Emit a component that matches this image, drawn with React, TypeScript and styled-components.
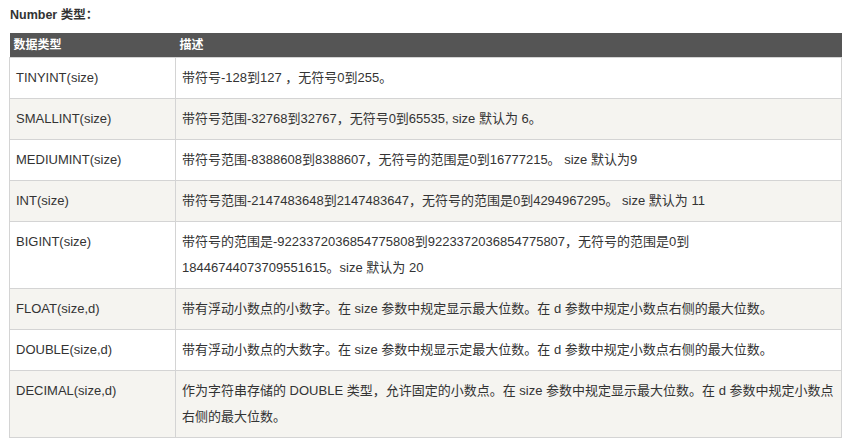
import React from 'react'
import styled, { createGlobalStyle } from 'styled-components'

const GlobalStyle = createGlobalStyle`
  body {
    margin: 0;
    background: #fff;
    font-family: "Liberation Sans", "Noto Sans CJK SC", sans-serif;
    color: #333;
  }
`

const Page = styled.div`
  padding: 6px 5px 0 9px;
  width: 833px;
`

const Title = styled.p`
  margin: 0 0 8px 1px;
  font-size: 12.5px;
  font-weight: bold;
  line-height: 19px;
`

const Table = styled.table`
  width: 100%;
  border-collapse: collapse;
  font-size: 13px;
`

const HeadCell = styled.th<{ $width?: string }>`
  background: #555;
  color: #fff;
  font-size: 12px;
  font-weight: bold;
  text-align: left;
  padding: 3px 4px;
  line-height: 18px;
  width: ${p => p.$width || 'auto'};
`

const Row = styled.tr<{ $alt?: boolean }>`
  background: ${p => (p.$alt ? '#f5f4f0' : '#fff')};
`

const Cell = styled.td`
  border: 1px solid #d4d4d4;
  padding: 7px 6px;
  line-height: 26px;
  vertical-align: top;
`

const rows = [
  ['TINYINT(size)', '带符号-128到127 ，无符号0到255。'],
  ['SMALLINT(size)', '带符号范围-32768到32767，无符号0到65535, size 默认为 6。'],
  ['MEDIUMINT(size)', '带符号范围-8388608到8388607，无符号的范围是0到16777215。 size 默认为9'],
  ['INT(size)', '带符号范围-2147483648到2147483647，无符号的范围是0到4294967295。 size 默认为 11'],
  ['BIGINT(size)', '带符号的范围是-9223372036854775808到9223372036854775807，无符号的范围是0到18446744073709551615。size 默认为 20'],
  ['FLOAT(size,d)', '带有浮动小数点的小数字。在 size 参数中规定显示最大位数。在 d 参数中规定小数点右侧的最大位数。'],
  ['DOUBLE(size,d)', '带有浮动小数点的大数字。在 size 参数中规显示定最大位数。在 d 参数中规定小数点右侧的最大位数。'],
  ['DECIMAL(size,d)', '作为字符串存储的 DOUBLE 类型，允许固定的小数点。在 size 参数中规定显示最大位数。在 d 参数中规定小数点右侧的最大位数。'],
]

export default function App () {
  return (
    <>
      <GlobalStyle />
      <Page>
        <Title>Number 类型：</Title>
        <Table>
          <thead>
            <tr>
              <HeadCell $width='158px'>数据类型</HeadCell>
              <HeadCell>描述</HeadCell>
            </tr>
          </thead>
          <tbody>
            {rows.map(([type, desc], i) => (
              <Row key={type} $alt={i % 2 === 1}>
                <Cell>{type}</Cell>
                <Cell>{desc}</Cell>
              </Row>
            ))}
          </tbody>
        </Table>
      </Page>
    </>
  )
}
